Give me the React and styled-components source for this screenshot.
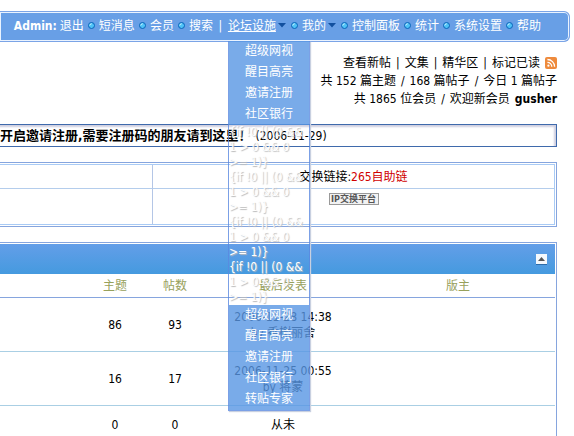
import React, {useState} from 'react'
import styled, {createGlobalStyle, css} from 'styled-components'

const GlobalStyle = createGlobalStyle`
  * {
    box-sizing: border-box;
  }

  body {
    margin: 0;
    background: #fff;
    color: #000;
    font-family: "DejaVu Sans Condensed", "Noto Sans CJK SC", sans-serif;
    font-size: 12px;
    line-height: 18px;
  }

  a {
    color: inherit;
    text-decoration: none;
  }
`

const Page = styled.div`
  height: 100vh;
  overflow: hidden;
  padding-top: 11px;
`

const MenuBar = styled.nav`
  display: flex;
  justify-content: flex-end;
  align-items: center;
  height: 31px;
  margin-right: 4px;
  padding: 0 28px 2px 0;
  border: 1px solid #7ba4e6;
  border-left: none;
  border-radius: 0 6px 6px 0;
  background: #689fe6;
  box-shadow: inset 0 0 0 1px #eaf3ff;
  color: #fff;
  white-space: nowrap;
`

const UserName = styled.strong`
  margin-right: 3px;
`

const MenuItem = styled.div`
  position: relative;
  display: flex;
  align-items: center;
`

const MenuLink = styled.a`
  text-decoration: ${({$active}) => ($active ? 'underline' : 'none')};
`

const Separator = styled.span`
  display: flex;
  justify-content: center;
  width: 15px;
`

const ArrowIcon = styled.svg`
  margin: 0 1px 0 2px;
`

const Dropdown = styled.div`
  position: absolute;
  top: 24px;
  left: 0;
  z-index: 2;
  width: 82px;
  border: 1px solid rgba(90, 136, 224, 0.8);
  border-top: none;
  box-shadow: 1px 1px 1px #c8d0e0;
`

const DropdownLink = styled.a`
  display: block;
  height: 21px;
  line-height: 21px;
  background: rgba(88, 150, 228, 0.8);
  text-align: center;
`

const TemplateCode = styled.p`
  margin: 0;
  line-height: 15px;
  white-space: pre;
  text-shadow: 1px 1px 1px #bbb;
`

const Summary = styled.div`
  margin: 12px 17px 16px 0;
`

const SummaryLine = styled.div`
  display: flex;
  justify-content: flex-end;
  align-items: center;
  gap: 5px;
`

const Announcement = styled.div`
  display: flex;
  align-items: center;
  gap: 4px;
  height: 23px;
  margin-right: 17px;
  border: 1px solid #3f6aac;
  border-left: none;
  box-shadow: inset -2px 2px 2px #cfcfe0;
  white-space: nowrap;
`

const AnnouncementLink = styled.a`
  font-size: 13px;
  font-weight: bold;
`

const Panel = styled.section`
  margin: 15px 17px 0 0;
  padding: 1px 1px 1px 0;
  border: 1px solid #86a5de;
  border-left: none;
`

const LinkTable = styled.table`
  width: 100%;
  border: 1px solid #a9cbf5;
  border-left: none;
  border-spacing: 0;
  table-layout: fixed;
`

const LinkCell = styled.td`
  height: ${({$tall}) => ($tall ? '35px' : '24px')};
  padding: ${({$tall}) => ($tall ? '4px 0 0' : '0')};
  border-bottom: ${({$tall}) => ($tall ? 'none' : '1px solid #b4cdec')};
  text-align: center;
  vertical-align: ${({$tall}) => ($tall ? 'top' : 'middle')};

  &:first-child {
    border-right: 1px solid #b4c6e6;
  }
`

const RedLink = styled.a`
  color: #d00000;
`

const BannerLink = styled.a`
  display: block;
  width: 50px;
  height: 12px;
  margin: 0 auto;
  border: 1px solid #999;
  background: #f2f2f2;
  color: #555;
  font-size: 9px;
  font-weight: bold;
  line-height: 10px;
  white-space: nowrap;
`

const PanelHead = styled.header`
  display: flex;
  justify-content: flex-end;
  align-items: center;
  height: 30px;
  padding-right: 8px;
  background: linear-gradient(#639ee8, #459adf);
`

const CollapseButton = styled.button`
  display: flex;
  justify-content: center;
  align-items: center;
  width: 11px;
  height: 10px;
  padding: 0;
  border: none;
  background: #f4f8fc;
  box-shadow: 0 1px 0 #2c6ba8;
  cursor: pointer;
`

const ForumTable = styled.table`
  width: 100%;
  border-spacing: 0;
  table-layout: fixed;
  line-height: 16px;
  text-align: center;
`

const cell = css`
  padding: 0;
  border-bottom: 1px solid #aacfe4;
`

const HeadCell = styled.th`
  ${cell}
  height: 24px;
  border-color: #86a5de;
  color: #97a15c;
  font-weight: normal;
`

const Row = styled.tr`
  height: ${({$empty}) => ($empty ? '39px' : '54px')};
`

const Cell = styled.td`
  ${cell}
`

const Col = styled.col`
  width: ${({$width}) => $width};
`

const menu = [
  {label: '退出', sep: 'dot'},
  {label: '短消息', sep: 'dot'},
  {label: '会员', sep: 'dot'},
  {label: '搜索', sep: 'bar'},
  {label: '论坛设施', sep: 'dot', arrow: true, open: true},
  {label: '我的', sep: 'dot', arrow: true},
  {label: '控制面板', sep: 'dot'},
  {label: '统计', sep: 'dot'},
  {label: '系统设置', sep: 'dot'},
  {label: '帮助'},
]

const facilities = ['超级网视', '醒目高亮', '邀请注册', '社区银行']
const condition = '{if !0 || (0 &&\n1 > 0 && 0\n>= 1)}'

const forums = [
  {id: 1, topics: 86, posts: 93, date: '2006-11-28 14:38', author: '香榭丽舍'},
  {id: 2, topics: 16, posts: 17, date: '2006-11-25 00:55', author: '蒋蒙'},
  {id: 3, topics: 0, posts: 0},
]

const Dot = () => (
  <svg width="7" height="7" viewBox="0 0 7 7">
    <circle cx="3.5" cy="3.5" r="3" fill="#4fc3f7" stroke="#0b62b8" />
    <path d="M1.8 3.4a1.8 1.8 0 0 1 1.8-1.6" fill="none" stroke="#d6f6ff" />
  </svg>
)

const Arrow = () => (
  <ArrowIcon width="8" height="5" viewBox="0 0 8 5">
    <path d="M0 0h8L4 4.5z" fill="#12509f" />
  </ArrowIcon>
)

const RssIcon = () => (
  <svg width="12" height="12" viewBox="0 0 12 12" display="block">
    <rect width="12" height="12" rx="2" fill="#ee8a3c" />
    <circle cx="3.4" cy="8.7" r="1.1" fill="#fff" />
    <path d="M2.4 5.3a4.4 4.4 0 0 1 4.4 4.4M2.4 2.5a7.2 7.2 0 0 1 7.2 7.2" fill="none" stroke="#fff" strokeWidth="1.3" />
  </svg>
)

const FacilityMenu = () => (
  <Dropdown>
    {facilities.map((name) => <DropdownLink href="#" key={name}>{name}</DropdownLink>)}
    {[1, 2, 3, 4].map((n) => <TemplateCode key={n}>{condition}</TemplateCode>)}
    {[...facilities, '转贴专家'].map((name) => <DropdownLink href="#" key={name}>{name}</DropdownLink>)}
  </Dropdown>
)

const App = () => {
  const [collapsed, setCollapsed] = useState(false)

  return (
    <Page>
      <GlobalStyle />
      <MenuBar>
        <UserName>Admin:</UserName>
        {menu.map((item) => (
          <React.Fragment key={item.label}>
            <MenuItem>
              <MenuLink href="#" $active={item.open}>{item.label}</MenuLink>
              {item.arrow && <Arrow />}
              {item.open && <FacilityMenu />}
            </MenuItem>
            {item.sep && <Separator>{item.sep === 'dot' ? <Dot /> : '|'}</Separator>}
          </React.Fragment>
        ))}
      </MenuBar>

      <Summary>
        <SummaryLine>
          <a href="#">查看新帖</a>
          <span>|</span>
          <a href="#">文集</a>
          <span>|</span>
          <a href="#">精华区</a>
          <span>|</span>
          <a href="#">标记已读</a>
          <a href="#" aria-label="RSS"><RssIcon /></a>
        </SummaryLine>
        <SummaryLine>
          <span>共 152 篇主题</span>
          <span>/</span>
          <span>168 篇帖子</span>
          <span>/</span>
          <span>今日 1 篇帖子</span>
        </SummaryLine>
        <SummaryLine>
          <span>共 1865 位会员</span>
          <span>/</span>
          <span>欢迎新会员</span>
          <a href="#"><b>gusher</b></a>
        </SummaryLine>
      </Summary>

      <Announcement>
        <AnnouncementLink href="#">开启邀请注册,需要注册码的朋友请到这里！</AnnouncementLink>
        <span>(2006-11-29)</span>
      </Announcement>

      <Panel>
        <LinkTable>
          <colgroup>
            <Col $width="153px" />
            <Col />
          </colgroup>
          <tbody>
            <tr>
              <LinkCell />
              <LinkCell>交换链接:<RedLink href="#">265自助链</RedLink></LinkCell>
            </tr>
            <tr>
              <LinkCell $tall />
              <LinkCell $tall><BannerLink href="#">IP交换平台</BannerLink></LinkCell>
            </tr>
          </tbody>
        </LinkTable>
      </Panel>

      <Panel>
        <PanelHead>
          <CollapseButton type="button" aria-label="收起" onClick={() => setCollapsed(!collapsed)}>
            <svg width="7" height="4" viewBox="0 0 7 4">
              <path d="M0 4L3.5 0L7 4z" fill="#555" />
            </svg>
          </CollapseButton>
        </PanelHead>
        {!collapsed &&
        <ForumTable>
          <colgroup>
            <Col />
            <Col $width="60px" />
            <Col $width="60px" />
            <Col $width="156px" />
            <Col $width="194px" />
          </colgroup>
          <thead>
            <tr>
              <HeadCell />
              <HeadCell>主题</HeadCell>
              <HeadCell>帖数</HeadCell>
              <HeadCell>最后发表</HeadCell>
              <HeadCell>版主</HeadCell>
            </tr>
          </thead>
          <tbody>
            {forums.map((forum) => (
              <Row key={forum.id} $empty={!forum.date}>
                <Cell />
                <Cell>{forum.topics}</Cell>
                <Cell>{forum.posts}</Cell>
                <Cell>
                  {forum.date ? <>{forum.date}<br />by <a href="#">{forum.author}</a></> : '从未'}
                </Cell>
                <Cell />
              </Row>
            ))}
          </tbody>
        </ForumTable>
        }
      </Panel>
    </Page>
  )
}

export default App
